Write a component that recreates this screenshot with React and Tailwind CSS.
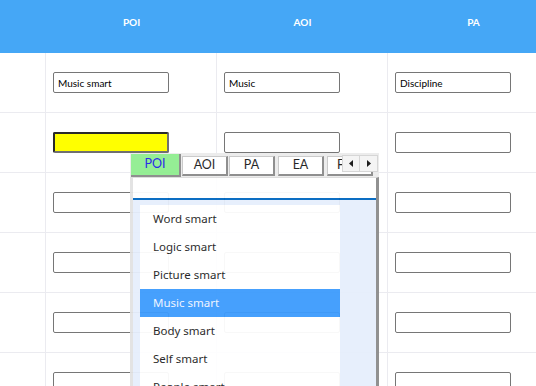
import React from 'react';

const rows = [
  ['Music smart', 'Music', 'Discipline'],
  ['', '', ''],
  ['', '', ''],
  ['', '', ''],
  ['', '', ''],
  ['', '', ''],
];

const options = ['Word smart', 'Logic smart', 'Picture smart', 'Music smart', 'Body smart', 'Self smart', 'People smart'];

function Cell({ value, yellow }) {
  return (
    <div className="h-[60px] border-r border-b border-[#ebebf0] pl-[7px] flex items-center">
      <input
        readOnly
        value={value}
        className={
          yellow
            ? 'w-[116px] h-[21px] bg-[#ffff00] border-2 border-[#2a2a2a] border-r-[#707070] border-b-[#707070] rounded-[2px] px-1 text-[10px] outline-none'
            : 'w-[116px] h-[21px] bg-white border border-[#767676] rounded-[2px] px-1 text-[10px] text-black outline-none'
        }
      />
    </div>
  );
}

function Tab({ label, active, className }) {
  if (active)
    return (
      <div className={'h-[23px] bg-[#90ee90] border-r-2 border-b-2 border-[#8a8a8a] flex items-center justify-center text-[12.5px] text-[#2020e8] ' + className}>
        {label}
      </div>
    );
  return (
    <div className={'h-[20px] mt-[3px] bg-white border border-[#c8c8c8] border-r-2 border-b-2 border-r-[#8a8a8a] border-b-[#8a8a8a] flex items-center justify-center text-[12.5px] text-[#1a1a1a] ' + className}>
      {label}
    </div>
  );
}

export default function App() {
  return (
    <div className="relative w-[536px] h-[386px] overflow-hidden bg-white" style={{ fontFamily: 'Lato, "Noto Sans", sans-serif' }}>
      <div className="grid grid-cols-[46px_171px_171px_171px]">
        <div className="h-[53px] bg-[#45a7f6]" />
        {['POI', 'AOI', 'PA'].map((h) => (
          <div key={h} className="h-[53px] bg-[#45a7f6] pt-[16px] text-center text-[10px] leading-[12px] font-bold text-white">
            {h}
          </div>
        ))}
        {rows.map((r, i) => (
          <React.Fragment key={i}>
            <div className="h-[60px] border-r border-b border-[#ebebf0]" />
            <Cell value={r[0]} yellow={i === 1} />
            <Cell value={r[1]} />
            <Cell value={r[2]} />
          </React.Fragment>
        ))}
      </div>

      {/* dropdown popup */}
      <div className="absolute left-[130px] top-[153px] w-[249px] h-[260px] opacity-[0.95]">
        <div className="relative h-[24px] bg-[#ececec] flex overflow-hidden">
          <Tab label="POI" active className="w-[50px] ml-[1px] mt-[1px]" />
          <Tab label="AOI" className="w-[46px] ml-[1px] shrink-0" />
          <Tab label="PA" className="w-[46px] ml-[1px] shrink-0" />
          <Tab label="EA" className="w-[46px] ml-[3px] shrink-0" />
          <Tab label="FA" className="w-[46px] ml-[3px] shrink-0 !justify-start pl-[9px]" />
          <div className="absolute left-[212px] top-[2px] flex">
            <button className="w-[18px] h-[17px] bg-[#f4f4f4] border border-[#d4d4d4] flex items-center justify-center">
              <svg width="5" height="7" viewBox="0 0 5 7"><path d="M4 0 L0 3.5 L4 7 Z" fill="#111" /></svg>
            </button>
            <button className="w-[18px] h-[17px] bg-[#f4f4f4] border border-[#d4d4d4] border-l-0 flex items-center justify-center">
              <svg width="5" height="7" viewBox="0 0 5 7"><path d="M1 0 L5 3.5 L1 7 Z" fill="#111" /></svg>
            </button>
          </div>
          <div className="absolute left-[248px] top-0 w-[2px] h-[24px] bg-[#ececec]" />
        </div>
        <div className="h-[236px] bg-[#e6effc] border-l-[3px] border-[#e2e2e2] border-r-[3px] border-r-[#8c8c8c] border-t border-t-[#dcdcdc]">
          <div className="h-[22px] bg-white border-b-2 border-[#0067c0]" />
          <div className="ml-[7px] mt-[5px] w-[200px] bg-white" style={{ fontFamily: '"Noto Sans", Lato, sans-serif' }}>
            {options.map((o) => (
              <div
                key={o}
                className={
                  o === 'Music smart'
                    ? 'h-[28px] flex items-center pl-[13px] text-[11.5px] bg-[#3d9bfd] text-[#eef4ff]'
                    : 'h-[28px] flex items-center pl-[13px] text-[11.5px] text-[#1c1c1c]'
                }
              >
                {o}
              </div>
            ))}
          </div>
        </div>
      </div>
    </div>
  );
}
